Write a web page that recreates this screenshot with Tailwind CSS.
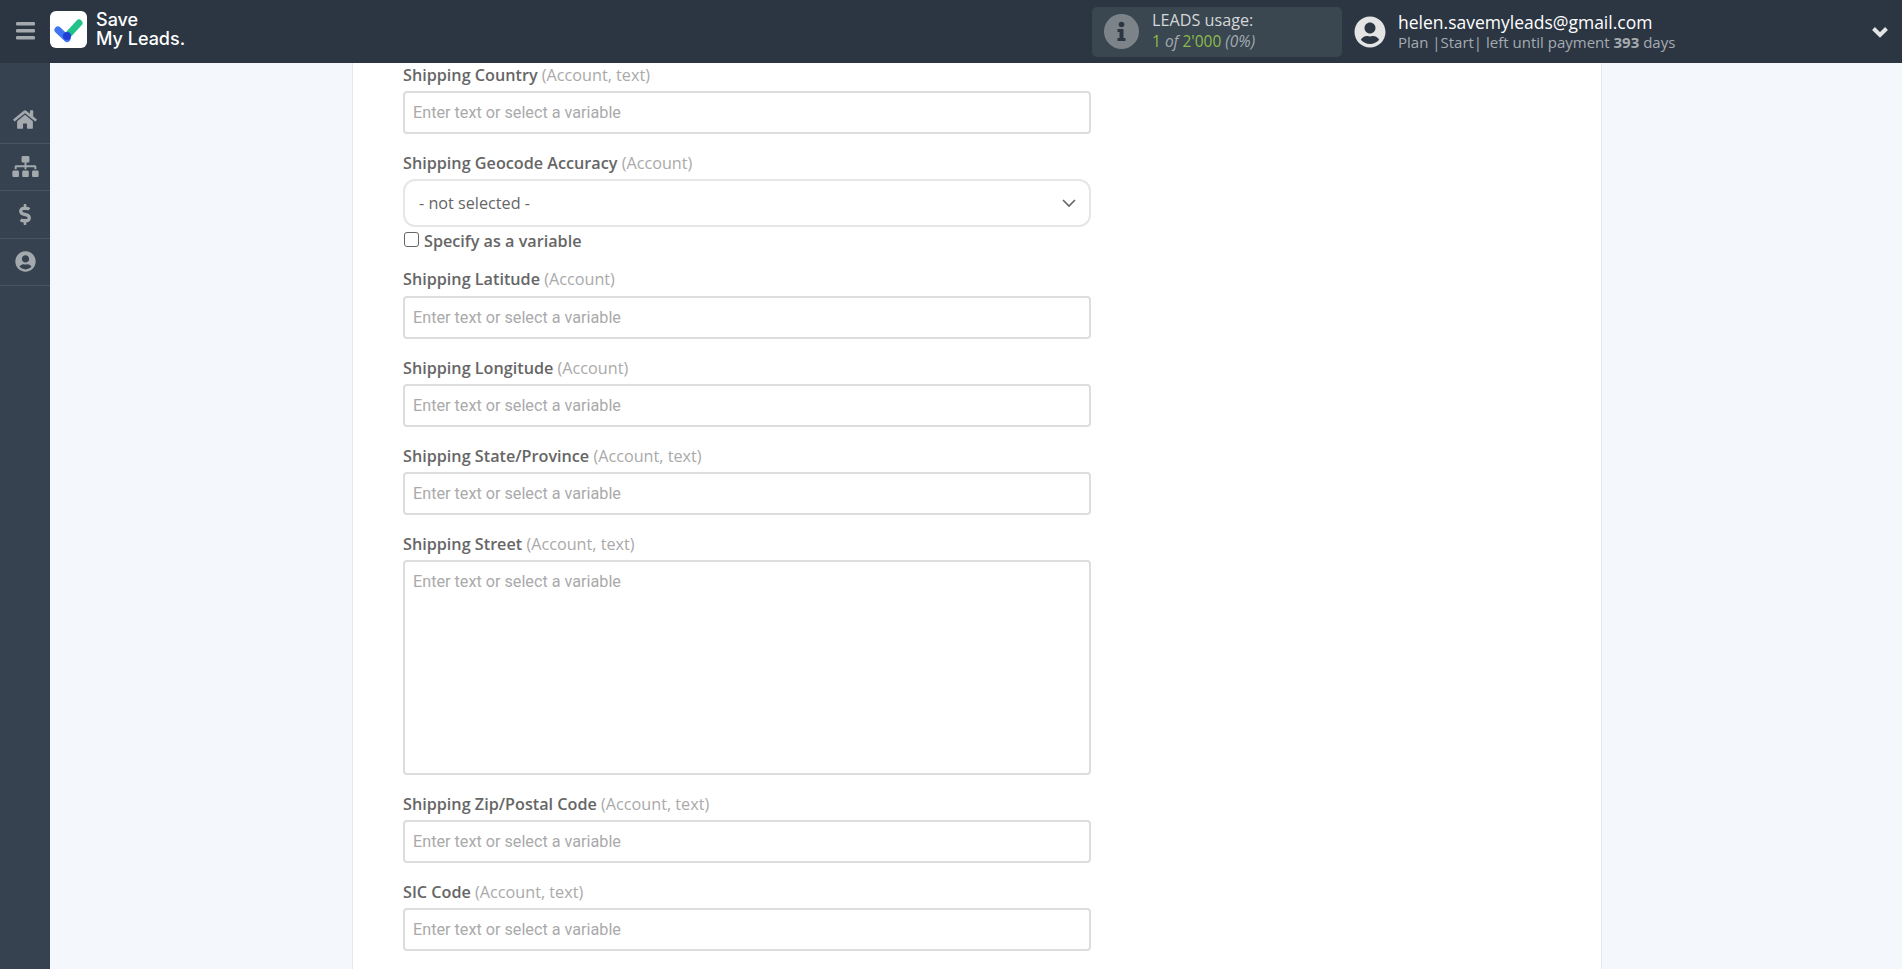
<!DOCTYPE html>
<html lang="en">
  <head>
    <meta charset="UTF-8" />
    <title>Save My Leads</title>
    <script src="https://cdn.jsdelivr.net/npm/@tailwindcss/browser@4"></script>
  </head>
  <body class="h-[969px] overflow-hidden bg-[#f4f7fc] font-['Open_Sans',sans-serif]">
    <!-- Top bar -->
    <header class="flex h-[63px] items-center bg-[#2c3643]">
      <div class="flex w-[50px] -translate-y-px justify-center">
        <svg class="h-[18px] w-[19px]" viewBox="0 0 19 18" fill="#a4a9ae"><rect y="0" width="19" height="3.4" rx="1.2"/><rect y="7" width="19" height="3.4" rx="1.2"/><rect y="14" width="19" height="3.4" rx="1.2"/></svg>
      </div>
      <div class="mb-[4px] flex h-[37px] w-[37px] items-center justify-center rounded-[6px] bg-white">
        <svg class="h-[37px] w-[37px]" viewBox="0 0 37 37">
          <path d="M8 19 L17 27.5" stroke="#3f74f0" stroke-width="7" stroke-linecap="round" fill="none"/>
          <path d="M17 25 L29 12" stroke="#22c38a" stroke-width="7" stroke-linecap="round" fill="none"/>
          <circle cx="17" cy="25" r="4" fill="#1f3fd6"/>
        </svg>
      </div>
      <div class="mb-[6px] ml-[9px] w-[92px] font-['Inter',sans-serif] text-[18px] leading-[19px] font-medium text-white">Save<br />My Leads.</div>

      <div class="ml-[904px] flex h-[50px] w-[250px] items-center rounded-[5px] bg-[#3a4650] pl-3">
        <svg class="h-[35px] w-[35px]" viewBox="0 0 35 35">
          <circle cx="17.5" cy="17.5" r="17.5" fill="#7c8489"/>
          <circle cx="17.5" cy="10.5" r="2.8" fill="#2c3643"/>
          <path d="M13.5 15h6v9h2v3h-8v-3h2v-6h-2z" fill="#2c3643"/>
        </svg>
        <div class="mb-[4px] ml-[13px]">
          <div class="text-[16.2px] leading-[22px] text-[#d5d8da]">LEADS usage:</div>
          <div class="text-[15.5px] leading-[20px] text-[#8dbb4b]">1 <i class="text-[#a4abb0]">of</i> 2'000 <i class="text-[#a4abb0]">(0%)</i></div>
        </div>
      </div>

      <svg class="ml-3 h-8 w-8" viewBox="0 0 496 512" fill="#e4e4e4"><path d="M248 8C111 8 0 119 0 256s111 248 248 248 248-111 248-248S385 8 248 8zm0 96c48.6 0 88 39.4 88 88s-39.4 88-88 88-88-39.4-88-88 39.4-88 88-88zm0 344c-58.7 0-111.3-26.6-146.5-68.2 18.8-35.4 55.6-59.8 98.5-59.8 2.4 0 4.8.4 7.1 1.1 13 4.2 26.6 6.9 40.9 6.9 14.3 0 28-2.7 40.9-6.9 2.3-.7 4.7-1.1 7.1-1.1 42.9 0 79.7 24.4 98.5 59.8C359.3 421.4 306.7 448 248 448z"/></svg>
      <div class="ml-3">
        <div class="text-[17.5px] leading-[22px] text-white">helen.savemyleads@gmail.com</div>
        <div class="text-[15px] leading-[19px] text-[#a4abb0]">Plan |Start| left until payment <b class="font-bold">393</b> days</div>
      </div>
      <svg class="ml-auto mr-[14px] h-[14px] w-4" viewBox="0 0 16 14" fill="none" stroke="#e4e4e4" stroke-width="4"><path d="M1.5 3.5 8 10l6.5-6.5"/></svg>
    </header>

    <div class="flex h-[906px]">
      <!-- Side menu -->
      <nav class="w-[50px] shrink-0 bg-[#36424f] pt-[33px]">
        <div class="flex h-[47.5px] items-center justify-center border-b border-[#4a5562]">
          <svg class="h-[21px] w-6" viewBox="0 0 576 512" fill="#a4a9ae"><path d="M280.37 148.26L96 300.11V464a16 16 0 0 0 16 16l112.06-.29a16 16 0 0 0 15.92-16V368a16 16 0 0 1 16-16h64a16 16 0 0 1 16 16v95.64a16 16 0 0 0 16 16.05L464 480a16 16 0 0 0 16-16V300L295.67 148.26a12.19 12.19 0 0 0-15.3 0zM571.6 251.47L488 182.56V44.05a12 12 0 0 0-12-12h-56a12 12 0 0 0-12 12v72.61L318.47 43a48 48 0 0 0-61 0L4.34 251.47a12 12 0 0 0-1.6 16.9l25.5 31A12 12 0 0 0 45.15 301l235.22-193.74a12.19 12.19 0 0 1 15.3 0L530.9 301a12 12 0 0 0 16.9-1.6l25.5-31a12 12 0 0 0-1.7-16.93z"/></svg>
        </div>
        <div class="flex h-[47.5px] items-center justify-center border-b border-[#4a5562]">
          <svg class="h-[21px] w-[27px]" viewBox="0 0 640 512" fill="#a4a9ae"><path d="M128 352H32c-17.67 0-32 14.33-32 32v96c0 17.67 14.33 32 32 32h96c17.67 0 32-14.33 32-32v-96c0-17.67-14.33-32-32-32zm-24-80h192v48h48v-48h192v48h48v-57.59c0-21.17-17.23-38.41-38.41-38.41H344v-64h40c17.67 0 32-14.33 32-32V32c0-17.67-14.33-32-32-32H256c-17.67 0-32 14.33-32 32v96c0 17.67 14.33 32 32 32h40v64H94.41C73.23 224 56 241.23 56 262.41V320h48v-48zm264 80h-96c-17.67 0-32 14.33-32 32v96c0 17.67 14.33 32 32 32h96c17.67 0 32-14.33 32-32v-96c0-17.67-14.33-32-32-32zm240 0h-96c-17.67 0-32 14.33-32 32v96c0 17.67 14.33 32 32 32h96c17.67 0 32-14.33 32-32v-96c0-17.67-14.33-32-32-32z"/></svg>
        </div>
        <div class="flex h-[47.5px] items-center justify-center border-b border-[#4a5562]">
          <svg class="h-[21px] w-3" viewBox="0 0 288 512" fill="#a4a9ae"><path d="M209.2 233.4l-108-31.6C88.7 198.2 80 186.5 80 173.5c0-16.3 13.2-29.5 29.5-29.5h66.3c12.2 0 24.2 3.7 34.2 10.5 6.1 4.1 14.3 3.1 19.5-2l34.8-34c7.1-6.9 6.1-18.4-1.8-24.5C238 74.8 207.4 64.1 176 64V16c0-8.8-7.2-16-16-16h-32c-8.8 0-16 7.2-16 16v48h-2.5C45.8 64-5.4 118.7.5 183.6c4.2 46.1 39.4 83.6 83.8 96.6l102.5 30c12.5 3.7 21.2 15.3 21.2 28.3 0 16.3-13.2 29.5-29.5 29.5h-66.3C100 368 88 364.3 78 357.5c-6.1-4.1-14.3-3.1-19.5 2l-34.8 34c-7.1 6.9-6.1 18.4 1.8 24.5 24.5 19.2 55.1 29.9 86.5 30v48c0 8.8 7.2 16 16 16h32c8.8 0 16-7.2 16-16v-48.2c46.6-.9 90.3-28.6 105.7-72.7 21.5-61.6-14.6-124.8-72.5-141.7z"/></svg>
        </div>
        <div class="flex h-[47.5px] items-center justify-center border-b border-[#4a5562]">
          <svg class="h-[21px] w-[21px]" viewBox="0 0 496 512" fill="#a4a9ae"><path d="M248 8C111 8 0 119 0 256s111 248 248 248 248-111 248-248S385 8 248 8zm0 96c48.6 0 88 39.4 88 88s-39.4 88-88 88-88-39.4-88-88 39.4-88 88-88zm0 344c-58.7 0-111.3-26.6-146.5-68.2 18.8-35.4 55.6-59.8 98.5-59.8 2.4 0 4.8.4 7.1 1.1 13 4.2 26.6 6.9 40.9 6.9 14.3 0 28-2.7 40.9-6.9 2.3-.7 4.7-1.1 7.1-1.1 42.9 0 79.7 24.4 98.5 59.8C359.3 421.4 306.7 448 248 448z"/></svg>
        </div>
      </nav>

      <!-- Form panel -->
      <main class="ml-[302px] w-[1250px] border-x border-[#e4e8ee] bg-white pt-[2px] pl-[50px]">
        <div class="w-[688px]">
          <label class="block text-[16.2px] leading-5 font-semibold text-[#666]">Shipping Country <span class="font-normal text-[#aaa]">(Account, text)</span></label>
          <input class="mt-[6px] mb-[19px] block h-[43px] w-full rounded-[4px] border-2 border-[#ddd] px-2 font-['Roboto',sans-serif] text-[16.2px] placeholder:text-[#aaa]" placeholder="Enter text or select a variable" />

          <label class="block text-[16.2px] leading-5 font-semibold text-[#666]">Shipping Geocode Accuracy <span class="font-normal text-[#aaa]">(Account)</span></label>
          <div class="mt-[6px] flex h-[48px] items-center justify-between rounded-[12px] border-2 border-[#e6e6e6] pr-[13px] pl-[14px] text-[16.2px] text-[#666]">
            - not selected -
            <svg class="h-[9px] w-[14px]" viewBox="0 0 14 9" fill="none" stroke="#666" stroke-width="1.6"><path d="M1 1l6 6 6-6"/></svg>
          </div>
          <label class="mt-[4px] mb-[18px] flex h-5 items-center text-[16.2px] font-semibold text-[#666]">
            <span class="ml-[1px] mr-[5px] h-[15px] w-[15px] -translate-y-[2px] rounded-[3px] border-[1.5px] border-[#666] bg-white"></span>Specify as a variable
          </label>

          <label class="block text-[16.2px] leading-5 font-semibold text-[#666]">Shipping Latitude <span class="font-normal text-[#aaa]">(Account)</span></label>
          <input class="mt-[7px] mb-[19px] block h-[43px] w-full rounded-[4px] border-2 border-[#ddd] px-2 font-['Roboto',sans-serif] text-[16.2px] placeholder:text-[#aaa]" placeholder="Enter text or select a variable" />

          <label class="block text-[16.2px] leading-5 font-semibold text-[#666]">Shipping Longitude <span class="font-normal text-[#aaa]">(Account)</span></label>
          <input class="mt-[6px] mb-[19px] block h-[43px] w-full rounded-[4px] border-2 border-[#ddd] px-2 font-['Roboto',sans-serif] text-[16.2px] placeholder:text-[#aaa]" placeholder="Enter text or select a variable" />

          <label class="block text-[16.2px] leading-5 font-semibold text-[#666]">Shipping State/Province <span class="font-normal text-[#aaa]">(Account, text)</span></label>
          <input class="mt-[6px] mb-[19px] block h-[43px] w-full rounded-[4px] border-2 border-[#ddd] px-2 font-['Roboto',sans-serif] text-[16.2px] placeholder:text-[#aaa]" placeholder="Enter text or select a variable" />

          <label class="block text-[16.2px] leading-5 font-semibold text-[#666]">Shipping Street <span class="font-normal text-[#aaa]">(Account, text)</span></label>
          <textarea class="mt-[6px] mb-[19px] block h-[215px] w-full resize-none rounded-[4px] border-2 border-[#ddd] px-2 py-[8px] font-['Roboto',sans-serif] text-[16.2px] placeholder:text-[#aaa]" placeholder="Enter text or select a variable"></textarea>

          <label class="block text-[16.2px] leading-5 font-semibold text-[#666]">Shipping Zip/Postal Code <span class="font-normal text-[#aaa]">(Account, text)</span></label>
          <input class="mt-[6px] mb-[19px] block h-[43px] w-full rounded-[4px] border-2 border-[#ddd] px-2 font-['Roboto',sans-serif] text-[16.2px] placeholder:text-[#aaa]" placeholder="Enter text or select a variable" />

          <label class="block text-[16.2px] leading-5 font-semibold text-[#666]">SIC Code <span class="font-normal text-[#aaa]">(Account, text)</span></label>
          <input class="mt-[6px] mb-[19px] block h-[43px] w-full rounded-[4px] border-2 border-[#ddd] px-2 font-['Roboto',sans-serif] text-[16.2px] placeholder:text-[#aaa]" placeholder="Enter text or select a variable" />
        </div>
      </main>
    </div>
  </body>
</html>
